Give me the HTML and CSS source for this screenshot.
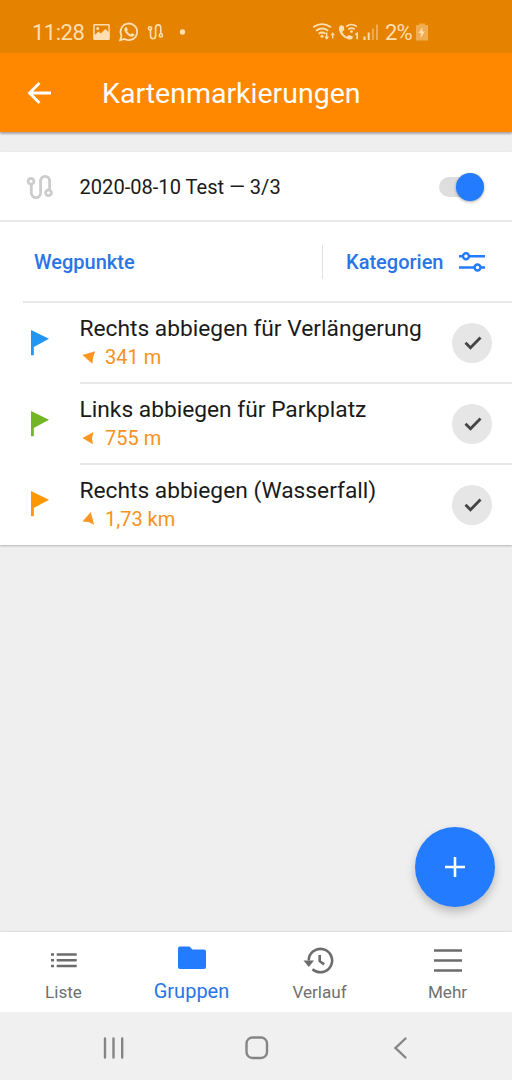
FILE: index.html
```html
<!DOCTYPE html>
<html lang="de">
  <head>
    <meta charset="UTF-8" />
    <meta name="viewport" content="width=device-width, initial-scale=1.0" />
    <title>Kartenmarkierungen</title>
    <link rel="stylesheet" href="styles.css">
  </head>
  <body>
    <div class="status-bar">
      <span class="clock">11:28</span>
      <svg class="status-left" width="104" height="24" viewBox="88 20 104 24">
        <path fill-rule="evenodd" d="M94.5 24h14a1.3 1.3 0 0 1 1.3 1.3v13.4a1.3 1.3 0 0 1-1.3 1.3h-14a1.3 1.3 0 0 1-1.3-1.3V25.300a1.300 1.300 0 0 1 1.300-1.300zM94.700 25.500v9.500l3.800-3.500 2.200 2 4.800-4.500 2.900 3v-6.500zM97.700 27a1.500 1.500 0 1 1 0 3 1.500 1.500 0 0 1 0-3z" />
        <path class="line" d="M120.200 40.200l1.300-4.500a8.300 8.300 0 1 1 3 3.200z" />
        <path d="M125.300 27.500c.7-.7 1.500-.4 1.700.2l.8 1.800c.2.600-.9 1.300-.6 1.800.8 1.400 1.800 2.300 3.300 2.900.6.200 1-1.200 1.700-1l1.800.9c.5.300.5 1-.1 1.600-1.300 1.500-3.200 1.100-5.500-.3-2.300-1.500-3.700-3.500-4-5.300-.1-1 .2-1.900.9-2.600z" />
        <g class="line thin">
          <circle cx="150" cy="28.300" r="1.600" />
          <circle cx="160.900" cy="35.400" r="1.600" />
          <path d="M150.500 30v5.500c0 4.300 5.100 4.300 5.100 0v-7.500c0-4.200 5.200-4.200 5.200 0v5.500" />
        </g>
        <circle cx="182.500" cy="32" r="2.700" />
      </svg>
      <svg class="status-right" width="68" height="24" viewBox="310 20 68 24">
        <g class="line">
          <path d="M313.200 27.200q8.800-6.200 17.800 0M316 30.700q6.100-4.400 12.200 0M318.700 33.700q3.400-2.400 6.800 0" />
        </g>
        <circle cx="322" cy="36.200" r="1.500" />
        <path d="M326 32.500h1.400v4h1.800l-2.500 3.200-2.500-3.200h1.800zM332 38.500h1.400v-3.300h1.500l-2.200-3-2.200 3h1.500z" />
        <path d="M341 25.300l2.800.8.500 4-2 1.600c1 2.500 2.300 3.900 4.500 5l2-1.700 4 1.500-.2 1.800c-1 1.400-2.500 1.400-4.300.9-5.200-1.500-8.800-5.600-9.400-10.300-.1-1.600.7-3 2.100-3.600z" />
        <g class="line thin">
          <path d="M346.200 26.600q5.200-4.200 10.600 0M348.300 29.300q3.200-2.400 6.400 0M355.300 34.600l1.900-1.200v5.800" />
        </g>
        <circle cx="351.500" cy="31.600" r="1.300" />
        <path d="M363.500 36.500h2v3.500h-2zM367.700 32.500h2v7.500h-2z" />
        <path class="faded" d="M371.900 28.500h2v11.500h-2zM376 24.500h2V40h-2z" />
      </svg>
      <span class="battery-level">2%</span>
      <svg class="battery" width="12" height="18" viewBox="0 0 12 18">
        <path class="faded" d="M3 .500h6V2h3v15.500H0V2h3z" />
        <path d="M6.700 4L2.500 10h2.700l-.8 5 4.500-6.500H6.200z" />
      </svg>
    </div>

    <header class="app-bar">
      <svg class="back" width="26" height="24" viewBox="0 0 26 24">
        <path d="M24 12H2.500M12.500 2l-10 10 10 10" />
      </svg>
      <h1>Kartenmarkierungen</h1>
    </header>

    <main class="content">
      <section class="card">
        <div class="group-row">
          <svg class="track-icon" width="28" height="28" viewBox="26 172 28 28">
            <circle cx="31" cy="180.300" r="2.900" />
            <circle cx="48.500" cy="191.700" r="2.900" />
            <path d="M31.300 183.500v8.300c0 6.500 9.300 6.500 9.300 0v-11.500c0-6.600 9-6.600 9 0v8" />
          </svg>
          <span class="group-name">2020-08-10 Test — 3/3</span>
          <span class="switch"><span class="thumb"></span></span>
        </div>

        <div class="points-header">
          <span class="points-title">Wegpunkte</span>
          <a class="categories">
            <span>Kategorien</span>
            <svg width="26" height="20" viewBox="0 0 26 20">
              <path d="M0 4.300h4M10 4.300h16M0 15.500h15.500M21.500 15.500H26" />
              <circle cx="7" cy="4.300" r="3" />
              <circle cx="18.500" cy="15.500" r="3" />
            </svg>
          </a>
        </div>

        <ul class="points">
          <li class="point">
            <svg class="flag blue" width="18" height="26" viewBox="0 0 18 26"><path d="M0 0l18 8.800L2.800 17v8.300H0z" /></svg>
            <div class="point-info">
              <span class="point-name">Rechts abbiegen für Verlängerung</span>
              <span class="distance">
                <svg width="14" height="14" viewBox="0 0 14 14"><path d="M.500 4L13.200.300l-2 5.700-.9 6.800z" /></svg>
                341 m
              </span>
            </div>
            <span class="check"><svg width="18" height="14" viewBox="0 0 18 14"><path d="M1.500 6.800l5 5L16.500 1.500" /></svg></span>
          </li>
          <li class="point">
            <svg class="flag green" width="18" height="26" viewBox="0 0 18 26"><path d="M0 0l18 8.800L2.800 17v8.300H0z" /></svg>
            <div class="point-info">
              <span class="point-name">Links abbiegen für Parkplatz</span>
              <span class="distance">
                <svg width="14" height="14" viewBox="0 0 14 14"><path d="M.500 6L11.500 0l-1.500 6.200.9 6z" /></svg>
                755 m
              </span>
            </div>
            <span class="check"><svg width="18" height="14" viewBox="0 0 18 14"><path d="M1.500 6.800l5 5L16.500 1.500" /></svg></span>
          </li>
          <li class="point">
            <svg class="flag orange" width="18" height="26" viewBox="0 0 18 26"><path d="M0 0l18 8.800L2.800 17v8.300H0z" /></svg>
            <div class="point-info">
              <span class="point-name">Rechts abbiegen (Wasserfall)</span>
              <span class="distance">
                <svg width="14" height="14" viewBox="0 0 14 14"><path d="M8.800-1l3.300 12.700-5.600-2.700-6-.4z" /></svg>
                1,73 km
              </span>
            </div>
            <span class="check"><svg width="18" height="14" viewBox="0 0 18 14"><path d="M1.500 6.800l5 5L16.500 1.500" /></svg></span>
          </li>
        </ul>
      </section>

      <button class="add-btn" aria-label="Hinzufügen">
        <svg width="20" height="20" viewBox="0 0 20 20"><path d="M10 0v20M0 10h20" /></svg>
      </button>
    </main>

    <nav class="tab-bar">
      <a class="tab">
        <svg width="30" height="28" viewBox="0 0 30 28"><path d="M2 8.500h3M7.700 8.500h20M2 14.200h3M7.700 14.200h20M2 20h3M7.700 20h20" /></svg>
        <span>Liste</span>
      </a>
      <a class="tab active">
        <svg width="30" height="28" viewBox="0 0 30 28"><path d="M3 .500h9.500L15.500 3.500H27a2 2 0 0 1 2 2V21a2 2 0 0 1-2 2H3a2 2 0 0 1-2-2V2.500a2 2 0 0 1 2-2z" /></svg>
        <span>Gruppen</span>
      </a>
      <a class="tab">
        <svg width="30" height="28" viewBox="0 0 30 28">
          <path d="M3.700 14.500A11.700 11.700 0 1 1 7.500 23.200M14.700 9v6.200l4.500 3.200" />
          <path class="solid" d="M-1.500 14.500h10.500L3.800 21z" />
        </svg>
        <span>Verlauf</span>
      </a>
      <a class="tab">
        <svg width="30" height="28" viewBox="0 0 30 28"><path d="M1 4.500h28M1 14.500h28M1 24.500h28" /></svg>
        <span>Mehr</span>
      </a>
    </nav>

    <div class="system-nav">
      <svg width="24" height="24" viewBox="0 0 24 24"><path d="M3 2.500v19M11.500 2.500v19M20.200 2.500v19" /></svg>
      <svg width="24" height="24" viewBox="0 0 24 24"><rect x="1.500" y="1.500" width="20.500" height="20.500" rx="6" /></svg>
      <svg width="24" height="24" viewBox="0 0 24 24"><path d="M17.500 2.500L7.500 12 17.500 21.500" /></svg>
    </div>
  </body>
</html>
```
FILE: styles.css
```css
* {
  box-sizing: border-box;
}
body {
  font-family: Roboto, "Liberation Sans", sans-serif;
  margin: 0;
  height: 1080px;
  overflow: hidden;
  background-color: #efefef;
  color: #1a1a1a;
  display: flex;
  flex-direction: column;
}
svg {
  display: block;
  flex: none;
  overflow: visible;
}

/* Status bar */
.status-bar {
  height: 53px;
  padding: 11px 84px 0 32px;
  background-color: #e58200;
  color: #ffdfb0;
  fill: #ffdfb0;
  display: flex;
  align-items: center;
  font-size: 22px;
}
.clock {
  width: 56px;
  letter-spacing: -0.5px;
}
.line {
  fill: none;
  stroke: #ffdfb0;
  stroke-width: 1.8;
}
.thin {
  stroke-width: 1.6;
}
.faded {
  opacity: 0.45;
}
.status-right {
  margin-left: auto;
}
.battery-level {
  margin-left: 7px;
  width: 30px;
  letter-spacing: -0.8px;
}
.battery {
  margin-left: 1px;
}

/* App bar */
.app-bar {
  height: 79px;
  padding-left: 27px;
  background-color: #ff8800;
  color: white;
  display: flex;
  align-items: center;
  gap: 49px;
  box-shadow: 0 2px 2px rgba(0, 0, 0, 0.3);
}
.app-bar h1 {
  margin: 2px 0 0;
  font-size: 28.5px;
  font-weight: normal;
}
.back {
  fill: none;
  stroke: white;
  stroke-width: 2.8;
}

/* Marker group */
.content {
  flex: 1;
  padding-top: 20px;
  display: flex;
  flex-direction: column;
}
.card {
  background-color: white;
  box-shadow: 0 1px 2px rgba(0, 0, 0, 0.25);
}
.group-row {
  height: 70px;
  padding: 1px 28px 0 26px;
  border-bottom: 2px solid #e8e8e8;
  display: flex;
  align-items: center;
}
.track-icon {
  fill: none;
  stroke: #cccccc;
  stroke-width: 2.8;
}
.group-name {
  flex: 1;
  margin: 1px 0 0 25.5px;
  font-size: 20.1px;
}
.switch {
  width: 45px;
  height: 20px;
  border-radius: 10px;
  background-color: #dedede;
  display: flex;
  align-items: center;
  justify-content: flex-end;
}
.thumb {
  width: 28px;
  height: 28px;
  border-radius: 50%;
  background-color: #237bff;
  box-shadow: 0 1px 3px rgba(0, 0, 0, 0.35);
}
.points-header {
  height: 81px;
  margin-left: 23px;
  padding: 0 27px 0 11px;
  border-bottom: 2px solid #e8e8e8;
  color: #2a75e6;
  font-size: 20px;
  font-weight: 500;
  display: flex;
  align-items: center;
  justify-content: space-between;
}
.categories {
  height: 34px;
  padding-left: 23.5px;
  border-left: 1px solid #e0e0e0;
  display: flex;
  align-items: center;
  gap: 15.5px;
}
.categories svg {
  fill: none;
  stroke: #237bff;
  stroke-width: 2.4;
}
.points {
  margin: 0;
  padding: 0;
  list-style: none;
}
.point {
  position: relative;
  height: 81px;
  padding: 0 0 0 31px;
  display: flex;
  align-items: center;
}
.point:last-child {
  height: 80px;
}
.flag {
  margin: -2px 30.5px 0 0;
}
.blue {
  fill: #2196f3;
}
.green {
  fill: #72b626;
}
.orange {
  fill: #ff9800;
}
.point-info {
  flex: 1;
  height: 100%;
  padding-top: 11px;
  border-bottom: 2px solid #e8e8e8;
}
.point:last-child .point-info {
  border-bottom: none;
}
.point-name {
  display: block;
  font-size: 22.75px;
  line-height: 29px;
  white-space: nowrap;
}
.distance {
  display: flex;
  align-items: center;
  gap: 9px;
  padding-left: 2.5px;
  color: #f59222;
  fill: #fc9620;
  font-size: 20px;
  line-height: 29px;
}
.check {
  position: absolute;
  right: 20px;
  top: 19.5px;
  width: 40px;
  height: 40px;
  border-radius: 50%;
  background-color: #e6e6e6;
  display: flex;
  align-items: center;
  justify-content: center;
}
.check svg {
  margin-left: 1px;
  fill: none;
  stroke: #454545;
  stroke-width: 2.8;
}

.add-btn {
  width: 80px;
  height: 80px;
  margin: auto 17px 25px auto;
  padding: 0;
  border: none;
  border-radius: 50%;
  background-color: #237bff;
  box-shadow: 0 5px 10px rgba(0, 0, 0, 0.22);
  display: flex;
  align-items: center;
  justify-content: center;
}
.add-btn svg {
  stroke: white;
  stroke-width: 2.6;
}

/* Bottom navigation */
.tab-bar {
  height: 80px;
  background-color: white;
  box-shadow: 0 0 2px rgba(0, 0, 0, 0.2);
  display: grid;
  grid-template-columns: repeat(4, 1fr);
}
.tab {
  padding-top: 14px;
  display: flex;
  flex-direction: column;
  align-items: center;
  color: #707070;
  font-size: 17.1px;
  line-height: 24px;
}
.tab span {
  margin: 5.5px 1px 0 0;
}
.tab svg {
  fill: none;
  stroke: #6c6c6c;
  stroke-width: 2.6;
}
.tab .solid {
  fill: #6c6c6c;
  stroke: none;
}
.tab.active {
  color: #2a75e6;
  font-size: 20px;
}
.tab.active span {
  margin-top: 5px;
}
.tab.active svg {
  fill: #237bff;
  stroke: none;
}
.system-nav {
  height: 68px;
  padding: 4px 100px 0 102px;
  background-color: #f0f0f0;
  display: flex;
  align-items: center;
  justify-content: space-between;
}
.system-nav svg {
  fill: none;
  stroke: #858585;
  stroke-width: 2.4;
  stroke-linecap: round;
}
```
